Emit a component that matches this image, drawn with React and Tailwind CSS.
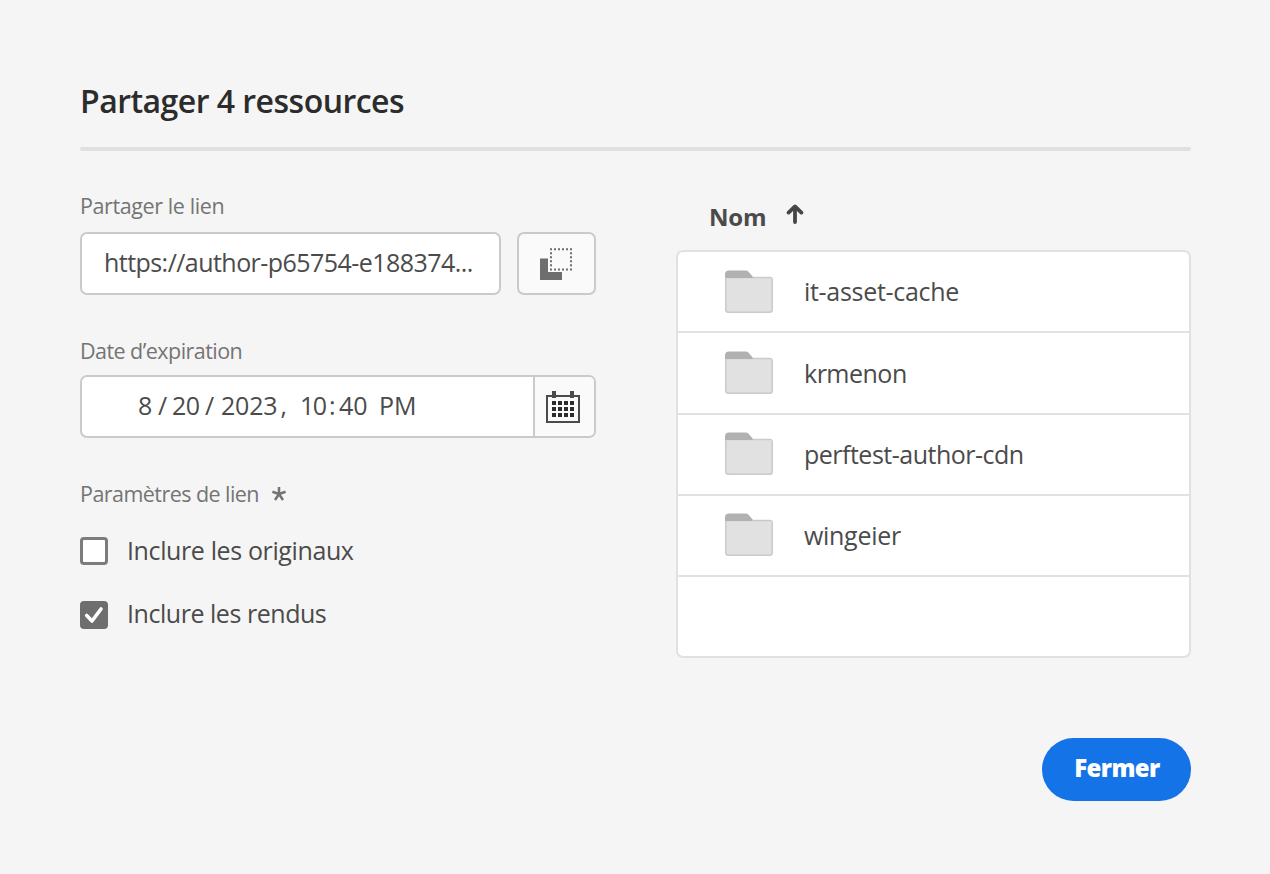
const rows = [
  { name: "it-asset-cache", tracking: "tracking-[-0.3px]" },
  { name: "krmenon", tracking: "tracking-[-0.5px]" },
  { name: "perftest-author-cdn", tracking: "tracking-[-0.5px]" },
  { name: "wingeier", tracking: "tracking-[-0.3px]" },
];

function FolderIcon() {
  return (
    <svg className="h-11 w-12 shrink-0" viewBox="0 0 48 44" fill="none">
      <path d="M0 10V4.5Q0 .6 4 .6H20.5Q22.5 .6 23.8 2L28.5 7.5V10Z" fill="#b1b1b1" />
      <path d="M0 8H27L28 6.7H44.5Q48 6.7 48 10V39.5Q48 43 44.5 43H3.5Q0 43 0 39.5Z" fill="#cacaca" />
      <path d="M0 4H22V8H0Z" fill="#b1b1b1" />
      <path d="M1.5 8.3H46.5V39.5Q46.5 41.5 44.5 41.5H3.5Q1.5 41.5 1.5 39.5Z" fill="#e1e1e1" />
    </svg>
  );
}

function CopyIcon() {
  return (
    <svg className="mr-px h-8 w-8" viewBox="0 0 32 32" fill="none">
      <path d="M0 10.5H8V24H22V32H0Z" fill="#6e6e6e" />
      <path d="M10 1.2H32M10 21.4H32M11 4.2V20M31 4.2V20" stroke="#6e6e6e" strokeWidth="2" strokeDasharray="2 2" />
    </svg>
  );
}

function CalendarIcon() {
  return (
    <svg className="mr-[3px] h-8 w-[34px]" viewBox="0 0 34 32" fill="none">
      <rect x="1" y="5" width="32" height="26" stroke="#4b4b4b" strokeWidth="2" />
      <path d="M6 0H10V7H6ZM24 0H28V7H24Z" fill="#4b4b4b" />
      {[10, 16, 22].map((y) =>
        [6, 12, 18, 24].map((x) => <rect key={x + "-" + y} x={x} y={y} width="4" height="4" fill="#2c2c2c" />)
      )}
    </svg>
  );
}

function SortArrow() {
  return (
    <svg className="h-5 w-[18px]" viewBox="0 0 18 20" fill="none">
      <path d="M9 18V3M2.6 8.6L9 2.4L15.4 8.6" stroke="#464646" strokeWidth="3.8" strokeLinecap="round" strokeLinejoin="round" />
    </svg>
  );
}

function Asterisk() {
  return (
    <svg className="-mt-px h-3.5 w-3.5" viewBox="0 0 14 14" fill="none">
      <path d="M7 7V0M7 7L.4 4.8M7 7L13.6 4.8M7 7L3 13M7 7L11 13" stroke="#747474" strokeWidth="2.5" />
    </svg>
  );
}

export default function App() {
  return (
    <div className="flex min-h-screen w-[1270px] flex-col bg-[#f5f5f5] pt-[81px] pr-[79px] pl-20 font-['Open_Sans',sans-serif] whitespace-nowrap text-[#4b4b4b]">
      <h1 className="text-[32px] leading-10 font-semibold tracking-[-0.53px] text-[#2c2c2c]">Partager 4 ressources</h1>
      <div className="mt-[26px] h-1 rounded-full bg-[#e0e0e0]" />

      <div className="flex justify-between">
        <section className="flex w-[516px] flex-col pt-[43px]">
          <label className="text-[21.5px] leading-6 tracking-[-0.4px] text-[#747474]">Partager le lien</label>
          <div className="mt-3.5 flex gap-4">
            <div className="flex h-[63px] w-[421px] items-center rounded-[7px] border-2 border-[#cacaca] bg-white pb-px pl-[22px] text-[25px] tracking-[-0.55px]">
              https://author-p65754-e188374...
            </div>
            <button className="flex h-[63px] w-[79px] items-center justify-center rounded-[7px] border-2 border-[#cacaca] bg-[#fafafa]">
              <CopyIcon />
            </button>
          </div>

          <label className="mt-11 text-[21.5px] leading-6 tracking-[-0.55px] text-[#747474]">Date d’expiration</label>
          <div className="mt-3 flex h-[63px] overflow-hidden rounded-[7px] border-2 border-[#cacaca] bg-white">
            <div className="flex flex-1 items-center pb-px pl-14 text-[25px]">
              <span className="w-5">8</span>
              <span className="w-[14px]">/</span>
              <span className="w-[33px] tracking-[-0.5px]">20</span>
              <span className="w-4">/</span>
              <span className="w-[79px] tracking-[-0.2px]">2023<span className="ml-[3px]">,</span></span>
              <span className="w-[29px] tracking-[-1.5px]">10</span>
              <span className="w-[10px]">:</span>
              <span className="w-10">40</span>
              <span>PM</span>
            </div>
            <button className="flex w-[61px] items-center justify-center border-l-2 border-[#cacaca] bg-[#fafafa]">
              <CalendarIcon />
            </button>
          </div>

          <div className="mt-11 flex h-6 items-center gap-[13px] text-[21.5px] leading-6 tracking-[-0.55px] text-[#747474]">
            Paramètres de lien
            <Asterisk />
          </div>
          <div className="mt-[31px] flex h-7 items-center gap-[19px] text-[25px]">
            <span className="size-7 rounded-[4px] border-[3px] border-[#7c7c7c] bg-white" />
            <span className="pb-px tracking-[-0.38px]">Inclure les originaux</span>
          </div>
          <div className="mt-9 flex h-7 items-center gap-[19px] text-[25px]">
            <span className="flex size-7 items-center justify-center rounded-[4px] bg-[#6e6e6e]">
              <svg className="h-5 w-5" viewBox="0 0 20 20" fill="none">
                <path d="M2.7 10.5L8 16L17 4" stroke="#fff" strokeWidth="3.6" strokeLinecap="round" strokeLinejoin="round" />
              </svg>
            </span>
            <span className="pb-0.5 tracking-[-0.46px]">Inclure les rendus</span>
          </div>
        </section>

        <section className="flex w-[515px] flex-col pt-[50px]">
          <div className="flex h-8 gap-5 pl-[33px] text-2xl leading-8 font-bold tracking-[-0.2px]">
            Nom
            <span className="pt-[3px]"><SortArrow /></span>
          </div>
          <div className="mt-[17px] h-[408px] rounded-[7px] border-2 border-[#e1e1e1] bg-white">
            {rows.map((row) => (
              <div key={row.name} className="flex h-[81.25px] items-center gap-[31px] border-b-2 border-[#e1e1e1] pl-[47px]">
                <FolderIcon />
                <span className={"pt-px text-[25px] " + row.tracking}>{row.name}</span>
              </div>
            ))}
          </div>
        </section>
      </div>

      <div className="mt-20 flex justify-end">
        <button className="h-[63px] w-[149px] rounded-full bg-[#1473e6] pb-[3px] pl-px text-2xl font-extrabold tracking-[-0.6px] text-white">Fermer</button>
      </div>
    </div>
  );
}
